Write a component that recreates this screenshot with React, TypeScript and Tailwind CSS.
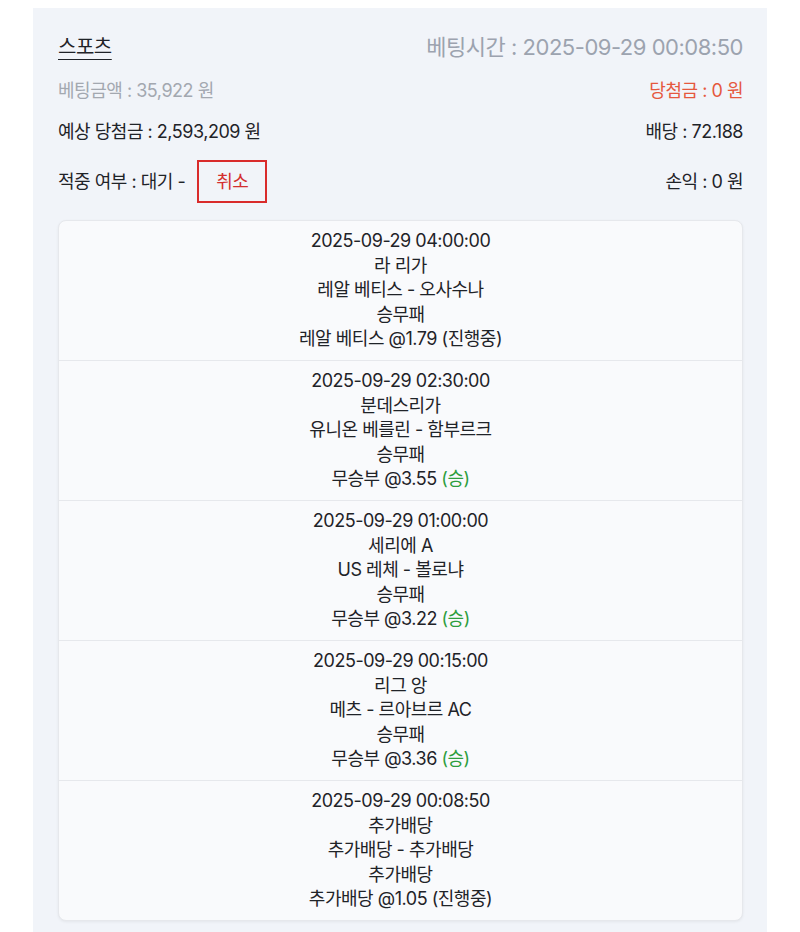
import React from "react";

type Game = {
  time: string;
  league: string;
  match: string;
  market: string;
  pick: string;
  status: string;
  win: boolean;
};

const games: Game[] = [
  { time: "2025-09-29 04:00:00", league: "라 리가", match: "레알 베티스 - 오사수나", market: "승무패", pick: "레알 베티스 @1.79", status: "(진행중)", win: false },
  { time: "2025-09-29 02:30:00", league: "분데스리가", match: "유니온 베를린 - 함부르크", market: "승무패", pick: "무승부 @3.55", status: "(승)", win: true },
  { time: "2025-09-29 01:00:00", league: "세리에 A", match: "US 레체 - 볼로냐", market: "승무패", pick: "무승부 @3.22", status: "(승)", win: true },
  { time: "2025-09-29 00:15:00", league: "리그 앙", match: "메츠 - 르아브르 AC", market: "승무패", pick: "무승부 @3.36", status: "(승)", win: true },
  { time: "2025-09-29 00:08:50", league: "추가배당", match: "추가배당 - 추가배당", market: "추가배당", pick: "추가배당 @1.05", status: "(진행중)", win: false },
];

export default function App() {
  return (
    <div
      className="min-h-[932px] bg-white pt-[8px]"
      style={{ fontFamily: '"Inter", "Noto Sans CJK KR", "Noto Sans", sans-serif' }}
    >
      <div className="mx-[33px] bg-[#f1f4f9] pl-[25px] pr-[24px] pt-[25px] pb-[20px] flex flex-col gap-[17px] text-[#1f2328] tracking-[-0.03em]">
        <div className="flex items-center justify-between h-[28px]">
          <span className="text-[20px] underline underline-offset-[5px] decoration-[1px]">스포츠</span>
          <span className="text-[22px] text-[#9ca3af]">베팅시간 : 2025-09-29 00:08:50</span>
        </div>
        <div className="flex items-center justify-between h-[24px] text-[18px]">
          <span className="text-[#a3a8b0]">베팅금액 : 35,922 원</span>
          <span className="text-[#e5583e]">당첨금 : 0 원</span>
        </div>
        <div className="flex items-center justify-between h-[24px] text-[18px]">
          <span>예상 당첨금 : 2,593,209 원</span>
          <span>배당 : 72.188</span>
        </div>
        <div className="flex items-center justify-between h-[43px] text-[18px]">
          <div className="flex items-center gap-[12px]">
            <span>적중 여부 : 대기 -</span>
            <span className="flex h-[43px] w-[70px] items-center justify-center border-2 border-solid border-[#d92b2b] text-[#d32f2f]">
              취소
            </span>
          </div>
          <span>손익 : 0 원</span>
        </div>
        <div className="bg-[#f9fafc] border border-[#e6e8ec] rounded-[8px] shadow-[0_1px_3px_rgba(0,0,0,0.06)] flex flex-col">
          {games.map((g, i) => (
            <div
              key={i}
              className={`flex flex-col items-center py-[8.25px] text-[18px] leading-[24.5px] text-[#1f2328] ${i > 0 ? "border-t border-[#e6e8ec]" : ""}`}
            >
              <span>{g.time}</span>
              <span>{g.league}</span>
              <span>{g.match}</span>
              <span>{g.market}</span>
              <span>
                {g.pick}{" "}
                <span className={g.win ? "text-[#2e9e3e]" : ""}>{g.status}</span>
              </span>
            </div>
          ))}
        </div>
      </div>
    </div>
  );
}
